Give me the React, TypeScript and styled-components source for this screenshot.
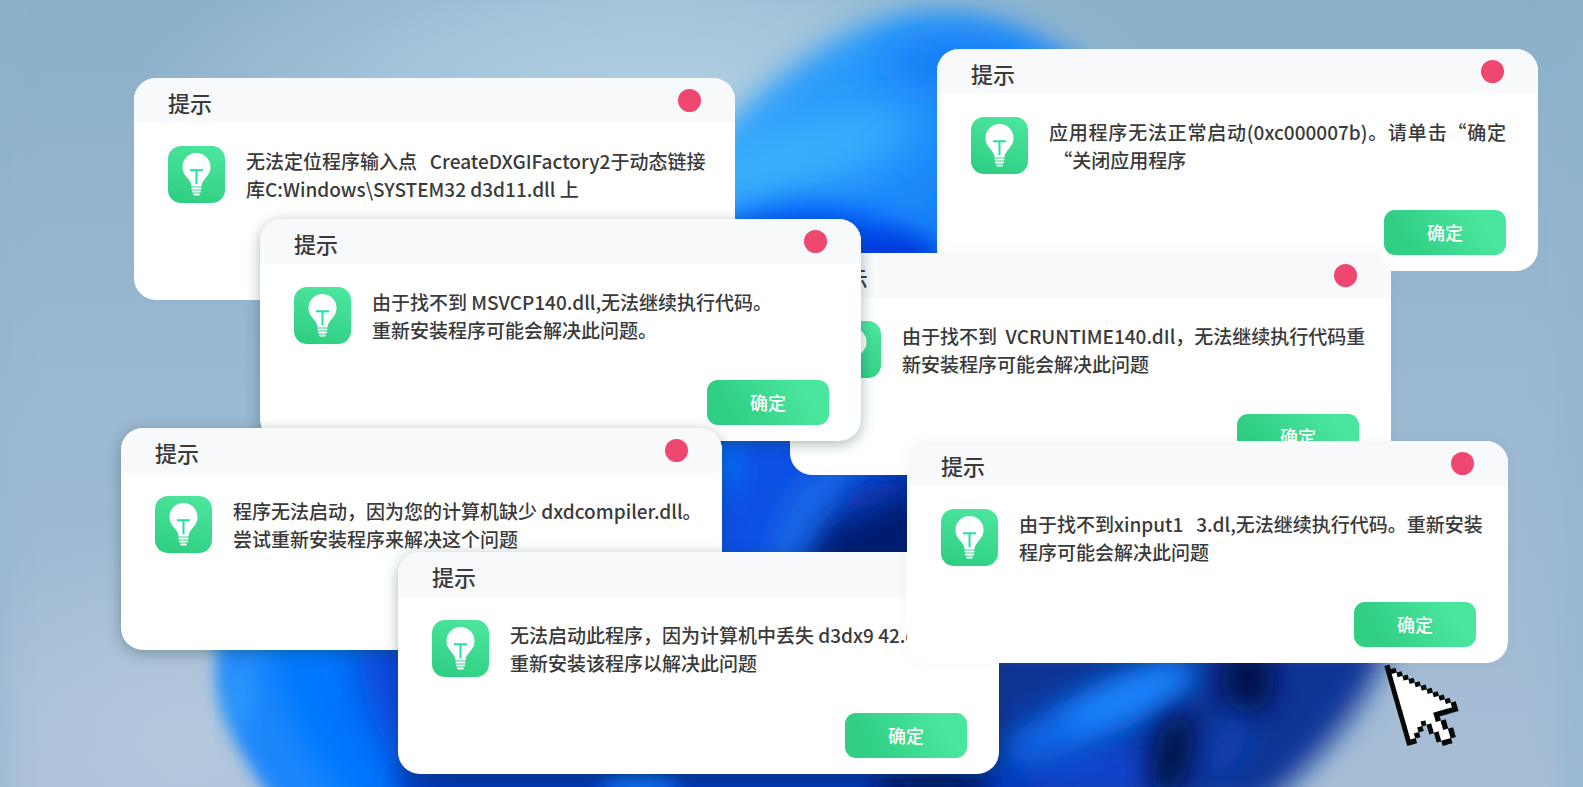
import React from 'react';
import styled, { createGlobalStyle } from 'styled-components';

const GlobalStyle = createGlobalStyle`
  * { box-sizing: border-box; }
  body {
    margin: 0;
    font-family: "Noto Sans CJK SC", "Noto Sans", sans-serif;
    color: #3a3a3a;
  }
  button { font-family: inherit; border: 0; padding: 0; cursor: pointer; }
`;

const Desktop = styled.main`
  position: relative;
  min-height: 100vh;
  overflow: hidden;
  background: #a3c0d6;
`;

const Wallpaper = styled.svg`
  position: absolute;
  inset: 0;
  width: 100%;
  height: 100%;
`;

type Depth = 'flat' | 'soft' | 'raised';

const shadows: Record<Depth, string> = {
  flat: 'none',
  soft: '0 0 16px rgba(0, 90, 60, 0.04)',
  raised: '0 3px 14px rgba(20, 60, 60, 0.36)',
};

const Dialog = styled.section<{ $x: number; $y: number; $depth: Depth }>`
  position: absolute;
  left: ${(p) => p.$x}px;
  top: ${(p) => p.$y}px;
  display: flex;
  flex-direction: column;
  width: 601px;
  min-height: 222px;
  border-radius: 22px;
  background: #fff;
  box-shadow: ${(p) => shadows[p.$depth]};
`;

const DialogHeader = styled.header`
  display: flex;
  justify-content: space-between;
  align-items: flex-start;
  height: 45px;
  padding: 11px 34px 0;
  border-radius: 22px 22px 0 0;
  background: #f8f9fb;
`;

const DialogTitle = styled.h2`
  margin: 0;
  font-size: 22px;
  font-weight: 500;
  line-height: 26px;
`;

const CloseButton = styled.button`
  width: 23px;
  height: 23px;
  border-radius: 50%;
  background: #f04770;
`;

const DialogBody = styled.div`
  display: flex;
  flex: 1;
  gap: 21px;
  padding: 23px 32px 0 34px;
`;

const Message = styled.p`
  flex: 1;
  margin: 0;
  padding-top: 1px;
  font-size: 19px;
  font-weight: 500;
  line-height: 28px;
  white-space: pre;
`;

const Line = styled.span<{ $fill: boolean }>`
  display: block;
  white-space: pre-wrap;
  text-align-last: ${(p) => (p.$fill ? 'justify' : 'start')};
`;

const DialogFooter = styled.footer`
  display: flex;
  justify-content: flex-end;
  padding: 0 32px 16px;
`;

const ConfirmButton = styled.button`
  width: 122px;
  height: 45px;
  border-radius: 11px;
  background: linear-gradient(60deg, #30cf84 20%, #4be69e 80%);
  color: #fff;
  font-size: 18px;
  font-weight: 500;
  line-height: 26px;
  padding-bottom: 2px;
`;

const IconTile = styled.svg`
  flex: none;
  width: 57px;
  height: 57px;
`;

const Pointer = styled.svg`
  position: absolute;
  left: 1380px;
  top: 660px;
  width: 90px;
  height: 96px;
`;

function BulbIcon() {
  return (
    <IconTile viewBox="0 0 57 57" aria-hidden="true">
      <rect width="57" height="57" rx="13" fill="url(#tile)" />
      <path
        d="M28.5 7a14 14 0 0 1 14 14c0 5-2.400 8-4.800 11-2.400 2.900-4 5-4.300 8.400h-9.800c-.3-3.400-1.900-5.500-4.300-8.400-2.400-3-4.800-6-4.800-11a14 14 0 0 1 14-14z"
        fill="#fff"
      />
      <path d="M24.400 42.500h8.200M24.800 45.500h7.400M26.200 48.500h4.600" stroke="#fff" strokeWidth="2" strokeLinecap="round" />
      <path d="M22 24.200h13M28.500 24.200v14" stroke="#22dfa2" strokeWidth="2" fill="none" />
    </IconTile>
  );
}

const pointerRows = [
  'X',
  'XX',
  'X.X',
  'X..X',
  'X...X',
  'X....X',
  'X.....X',
  'X......X',
  'X.......X',
  'X........X',
  'X.........X',
  'X..........X',
  'X......XXXXX',
  'X...X..X',
  'X..X X..X',
  'X.X  X..X',
  'XX    X..X',
  '      X..X',
  '       XX',
];

function PixelPointer() {
  return (
    <Pointer viewBox="0 0 90 96" aria-hidden="true">
      <g transform="translate(7.300 7.600) rotate(-16) scale(4.870) translate(-.5 -.5)">
        {pointerRows.flatMap((row, y) =>
          [...row].map((cell, x) =>
            cell === ' ' ? null : (
              <rect key={`${x}-${y}`} x={x} y={y} width="1.100" height="1.100" fill={cell === 'X' ? '#050807' : '#fff'} />
            ),
          ),
        )}
        <path d="M1.500 3L9.500 11.500H6.500V14L8.500 17H7.800L5.500 13H3.500L1.500 15z" fill="#fff" />
      </g>
    </Pointer>
  );
}

function Bloom() {
  return (
    <Wallpaper viewBox="0 0 1583 787" preserveAspectRatio="xMidYMid slice" aria-hidden="true">
      <defs>
        <linearGradient id="tile" x1=".65" y1="0" x2=".35" y2="1">
          <stop offset="0" stopColor="#4be59d" />
          <stop offset="1" stopColor="#2fcf83" />
        </linearGradient>
        <linearGradient id="sky" x1="0" y1="0" x2="0" y2="1">
          <stop offset="0" stopColor="#8bb0c9" />
          <stop offset=".5" stopColor="#9ab8d1" />
          <stop offset="1" stopColor="#a7bed6" />
        </linearGradient>
        <radialGradient id="glow">
          <stop offset="0" stopColor="#b2d0e3" />
          <stop offset=".5" stopColor="#b2d0e3" stopOpacity=".6" />
          <stop offset="1" stopColor="#b2d0e3" stopOpacity="0" />
        </radialGradient>
        <radialGradient id="glowLow">
          <stop offset="0" stopColor="#b4c8dd" />
          <stop offset="1" stopColor="#b4c8dd" stopOpacity="0" />
        </radialGradient>
        <linearGradient id="petal" gradientUnits="userSpaceOnUse" x1="760" y1="60" x2="960" y2="220">
          <stop offset="0" stopColor="#34a5fb" />
          <stop offset=".5" stopColor="#2493fb" />
          <stop offset="1" stopColor="#1580f8" />
        </linearGradient>
        <filter id="b8" x="-30%" y="-30%" width="160%" height="160%"><feGaussianBlur stdDeviation="8" /></filter>
        <filter id="b14" x="-100%" y="-100%" width="300%" height="300%"><feGaussianBlur stdDeviation="14" /></filter>
        <filter id="b22" x="-100%" y="-100%" width="300%" height="300%"><feGaussianBlur stdDeviation="22" /></filter>
      </defs>
      <rect width="1583" height="787" fill="url(#sky)" />
      <ellipse cx="650" cy="110" rx="520" ry="220" fill="url(#glow)" />
      <ellipse cx="190" cy="740" rx="300" ry="220" fill="url(#glowLow)" />
      <rect x="1560" y="-30" width="60" height="850" fill="#8fb2cc" opacity=".5" filter="url(#b14)" />
      <rect x="-45" y="-30" width="50" height="850" fill="#8fb2cc" opacity=".5" filter="url(#b14)" />

      {/* upper petal */}
      <path d="M700 160C760 80 850 14 930 12c60 0 120 22 160 60v400H700z" fill="url(#petal)" filter="url(#b14)" />
      <ellipse cx="950" cy="64" rx="70" ry="24" fill="#147cf6" filter="url(#b22)" />
      <ellipse cx="800" cy="155" rx="120" ry="26" fill="#3cb4fa" transform="rotate(-16 800 155)" filter="url(#b22)" />
      <path d="M690 245C760 190 880 180 950 280v240H690z" fill="#0458f8" filter="url(#b14)" />
      <ellipse cx="890" cy="260" rx="50" ry="26" fill="#0639da" filter="url(#b14)" />

      {/* centre folds */}
      <rect x="690" y="400" width="300" height="200" fill="#0a4fe4" filter="url(#b8)" />
      <ellipse cx="728" cy="465" rx="10" ry="30" fill="#0f7cfb" filter="url(#b14)" />
      <path d="M765 570C775 510 800 450 870 460l-70 120z" fill="#1268e6" filter="url(#b14)" />
      <path d="M790 590l40-70 100-60v150z" fill="#061f72" filter="url(#b14)" />
      <path d="M850 490l80-20v16l-90 34z" fill="#0a35ae" filter="url(#b14)" />

      {/* lower left petal */}
      <path d="M240 600c-40 50-30 120 40 210h300V600z" fill="#1a87fb" filter="url(#b8)" />
      <ellipse cx="238" cy="695" rx="8" ry="36" fill="#3aa7fb" filter="url(#b14)" />
      <path d="M270 620c0 60 20 120 80 190h200V600z" fill="#0478fd" filter="url(#b14)" />
      <path d="M360 620c-10 70 20 130 70 180h120V620z" fill="#0743d6" filter="url(#b22)" />

      {/* lower right petals */}
      <path d="M430 640h960c-20 60-60 110-130 170H430z" fill="#0a3496" filter="url(#b14)" />
      <path d="M400 765h640v40H400z" fill="#0636b4" filter="url(#b14)" />
      <ellipse cx="640" cy="787" rx="40" ry="12" fill="#0e6cee" filter="url(#b8)" />
      <ellipse cx="930" cy="784" rx="60" ry="10" fill="#06195c" filter="url(#b8)" />
      <ellipse cx="1090" cy="770" rx="80" ry="28" fill="#0747d8" filter="url(#b22)" />
      <ellipse cx="1100" cy="712" rx="105" ry="26" fill="#1068e8" transform="rotate(-25 1100 712)" filter="url(#b14)" />
      <ellipse cx="1126" cy="698" rx="70" ry="14" fill="#1c8cff" transform="rotate(-25 1126 698)" filter="url(#b14)" />
      <ellipse cx="1248" cy="680" rx="26" ry="34" fill="#010f4a" filter="url(#b14)" />
      <ellipse cx="1172" cy="756" rx="18" ry="44" fill="#00093f" transform="rotate(14 1172 756)" filter="url(#b14)" />
      <ellipse cx="1228" cy="745" rx="14" ry="36" fill="#0940b4" transform="rotate(24 1228 745)" filter="url(#b14)" />
    </Wallpaper>
  );
}

interface Notice {
  x: number;
  y: number;
  depth: Depth;
  lines: string[];
  fill?: boolean;
}

// Listed from the back of the stack to the front.
const notices: Notice[] = [
  { x: 134, y: 78, depth: 'flat', lines: ['无法定位程序输入点   CreateDXGIFactory2于动态链接', '库C:Windows\\SYSTEM32 d3d11.dll 上'] },
  { x: 937, y: 49, depth: 'flat', fill: true, lines: ['应用程序无法正常启动(0xc000007b)。请单击“确定', ' “关闭应用程序'] },
  { x: 790, y: 253, depth: 'soft', lines: ['由于找不到  VCRUNTIME140.dIl，无法继续执行代码重', '新安装程序可能会解决此问题'] },
  { x: 260, y: 219, depth: 'raised', lines: ['由于找不到 MSVCP140.dll,无法继续执行代码。', '重新安装程序可能会解决此问题。'] },
  { x: 121, y: 428, depth: 'raised', lines: ['程序无法启动，因为您的计算机缺少 dxdcompiler.dll。', '尝试重新安装程序来解决这个问题'] },
  { x: 398, y: 552, depth: 'raised', lines: ['无法启动此程序，因为计算机中丢失 d3dx9 42.dll', '重新安装该程序以解决此问题'] },
  { x: 907, y: 441, depth: 'soft', lines: ['由于找不到xinput1   3.dl,无法继续执行代码。重新安装', '程序可能会解决此问题'] },
];

function NoticeDialog({ x, y, depth, lines, fill = false }: Notice) {
  return (
    <Dialog $x={x} $y={y} $depth={depth} role="dialog" aria-label="提示">
      <DialogHeader>
        <DialogTitle>提示</DialogTitle>
        <CloseButton type="button" aria-label="关闭" />
      </DialogHeader>
      <DialogBody>
        <BulbIcon />
        <Message>
          {fill
            ? lines.map((line, index) => (
                <Line key={line} $fill={index < lines.length - 1}>
                  {line}
                </Line>
              ))
            : lines.join('\n')}
        </Message>
      </DialogBody>
      <DialogFooter>
        <ConfirmButton type="button">确定</ConfirmButton>
      </DialogFooter>
    </Dialog>
  );
}

export default function App() {
  return (
    <>
      <GlobalStyle />
      <Desktop lang="zh-CN">
        <Bloom />
        {notices.map((notice) => (
          <NoticeDialog key={`${notice.x}-${notice.y}`} {...notice} />
        ))}
        <PixelPointer />
      </Desktop>
    </>
  );
}
